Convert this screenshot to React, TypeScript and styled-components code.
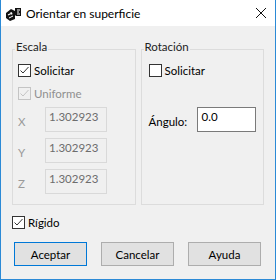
import * as React from 'react';
import styled, { createGlobalStyle } from 'styled-components';

const GlobalStyle = createGlobalStyle`
    html, body {
        margin: 0;
        padding: 0;
        background: #ffffff;
    }
`;

const Window = styled.div`
    width: 276px;
    height: 280px;
    box-sizing: border-box;
    border: 1px solid #2b8ad6;
    border-top: none;
    background-color: #f0f0f0;
    display: flex;
    flex-direction: column;
    font-family: Lato, "Noto Sans", sans-serif;
    font-size: 11.5px;
    color: #000;
`;

const TitleBar = styled.div`
    height: 26px;
    box-sizing: border-box;
    background-color: #ffffff;
    display: flex;
    align-items: center;
    padding: 2px 0 0 5px;
`;

const Title = styled.span`
    margin-left: 4px;
    line-height: 16px;
    font-size: 12px;
`;

const Close = styled.svg`
    margin-left: auto;
    margin-right: 9px;
    margin-top: -2px;
`;

const Body = styled.div`
    display: flex;
    flex-direction: column;
    padding: 23px 11px 0 11px;
`;

const GroupRow = styled.div`
    display: flex;
    gap: 5px;
`;

const Group = styled.div`
    width: 124px;
    height: 156px;
    box-sizing: border-box;
    border: 1px solid #dcdcdc;
    display: flex;
    flex-direction: column;
`;

const Legend = styled.span`
    align-self: flex-start;
    margin: -11px 0 0 2px;
    padding: 0 1px;
    line-height: 16px;
    background-color: #f0f0f0;
    color: #222;
`;

const GroupBody = styled.div<{ $inset: number }>`
    display: flex;
    flex-direction: column;
    padding-left: ${(p) => p.$inset}px;
`;

const CheckRow = styled.div<{ $top: number; $disabled?: boolean }>`
    display: flex;
    align-items: center;
    gap: 3px;
    height: 16px;
    margin-top: ${(p) => p.$top}px;
    color: ${(p) => (p.$disabled ? '#8f8f8f' : '#000')};
`;

const Box = styled.span<{ $disabled?: boolean }>`
    width: 13px;
    height: 13px;
    box-sizing: border-box;
    border: 1px solid ${(p) => (p.$disabled ? '#c4c4c4' : '#333333')};
    background-color: ${(p) => (p.$disabled ? '#f0f0f0' : '#ffffff')};
    display: flex;
    align-items: center;
    justify-content: center;
    flex-shrink: 0;
`;

const FieldRow = styled.div<{ $label: number; $box: number; $top: number }>`
    display: grid;
    grid-template-columns: ${(p) => p.$label}px ${(p) => p.$box}px;
    align-items: end;
    margin-top: ${(p) => p.$top}px;
`;

const FieldLabel = styled.span<{ $disabled?: boolean }>`
    line-height: 16px;
    padding-bottom: 2px;
    color: ${(p) => (p.$disabled ? '#9a9a9a' : '#000')};
`;

const TextBox = styled.div<{ $disabled?: boolean }>`
    height: 25px;
    box-sizing: border-box;
    line-height: 16px;
    padding: 1px ${(p) => (p.$disabled ? 3 : 4)}px;
    border: 1px solid ${(p) => (p.$disabled ? '#d9d9d9' : '#7a7a7a')};
    background-color: ${(p) => (p.$disabled ? '#f0f0f0' : '#ffffff')};
    color: ${(p) => (p.$disabled ? '#6d6d6d' : '#000')};
`;

const ButtonRow = styled.div`
    display: flex;
    gap: 14px;
    margin-top: 12px;
    padding-left: 2px;
`;

const Button = styled.button<{ $primary?: boolean }>`
    width: 73px;
    height: 24px;
    box-sizing: border-box;
    padding: 0;
    border: 1px solid ${(p) => (p.$primary ? '#0078d7' : '#adadad')};
    background-color: #e1e1e1;
    font-family: inherit;
    font-size: 11.5px;
    color: #000;
`;

const Check = ({ checked, disabled }: { checked?: boolean; disabled?: boolean }) => (
    <Box $disabled={disabled}>
        {checked && (
            <svg width="11" height="11" viewBox="0 0 11 11">
                <path d="M1.5 5.5 L4 8 L9.5 2" fill="none" stroke={disabled ? '#c4c4c4' : '#333'} strokeWidth="1" />
            </svg>
        )}
    </Box>
);

const AppIcon = () => (
    <svg width="16" height="15" viewBox="0 0 16 15">
        <path d="M0 6 L5 2 L9 4 L9 12 L4 14 L0 11 Z" fill="#111" />
        <path d="M9 1 H15 V9 H10 L9 8 Z" fill="#111" />
        <path d="M11 3 H14 M11 5 H13 M11 7 H14" stroke="#fff" strokeWidth="1" />
        <path d="M2 8 L6 6 M6 6 L4.5 5.5 M6 6 L5.5 7.5" stroke="#fff" strokeWidth="1.2" fill="none" />
        <path d="M3 11 L7 9" stroke="#fff" strokeWidth="1" />
    </svg>
);

const App = () => (
    <>
        <GlobalStyle />
        <Window>
            <TitleBar>
                <AppIcon />
                <Title>Orientar en superficie</Title>
                <Close width="10" height="10" viewBox="0 0 10 10">
                    <path d="M0 0 L10 10 M10 0 L0 10" stroke="#111" strokeWidth="1" />
                </Close>
            </TitleBar>
            <Body>
                <GroupRow>
                    <Group>
                        <Legend>Escala</Legend>
                        <GroupBody $inset={5}>
                            <CheckRow $top={7}>
                                <Check checked />
                                Solicitar
                            </CheckRow>
                            <CheckRow $top={7} $disabled>
                                <Check checked disabled />
                                Uniforme
                            </CheckRow>
                            <FieldRow $label={27} $box={62} $top={6}>
                                <FieldLabel $disabled>X</FieldLabel>
                                <TextBox $disabled>1.302923</TextBox>
                            </FieldRow>
                            <FieldRow $label={27} $box={62} $top={6}>
                                <FieldLabel $disabled>Y</FieldLabel>
                                <TextBox $disabled>1.302923</TextBox>
                            </FieldRow>
                            <FieldRow $label={27} $box={62} $top={6}>
                                <FieldLabel $disabled>Z</FieldLabel>
                                <TextBox $disabled>1.302923</TextBox>
                            </FieldRow>
                        </GroupBody>
                    </Group>
                    <Group>
                        <Legend>Rotación</Legend>
                        <GroupBody $inset={7}>
                            <CheckRow $top={7}>
                                <Check />
                                Solicitar
                            </CheckRow>
                            <FieldRow $label={48} $box={59} $top={29}>
                                <FieldLabel>Ángulo:</FieldLabel>
                                <TextBox>0.0</TextBox>
                            </FieldRow>
                        </GroupBody>
                    </Group>
                </GroupRow>
                <CheckRow $top={9}>
                    <Check checked />
                    Rígido
                </CheckRow>
                <ButtonRow>
                    <Button $primary>Aceptar</Button>
                    <Button>Cancelar</Button>
                    <Button>Ayuda</Button>
                </ButtonRow>
            </Body>
        </Window>
    </>
);

export default App;
